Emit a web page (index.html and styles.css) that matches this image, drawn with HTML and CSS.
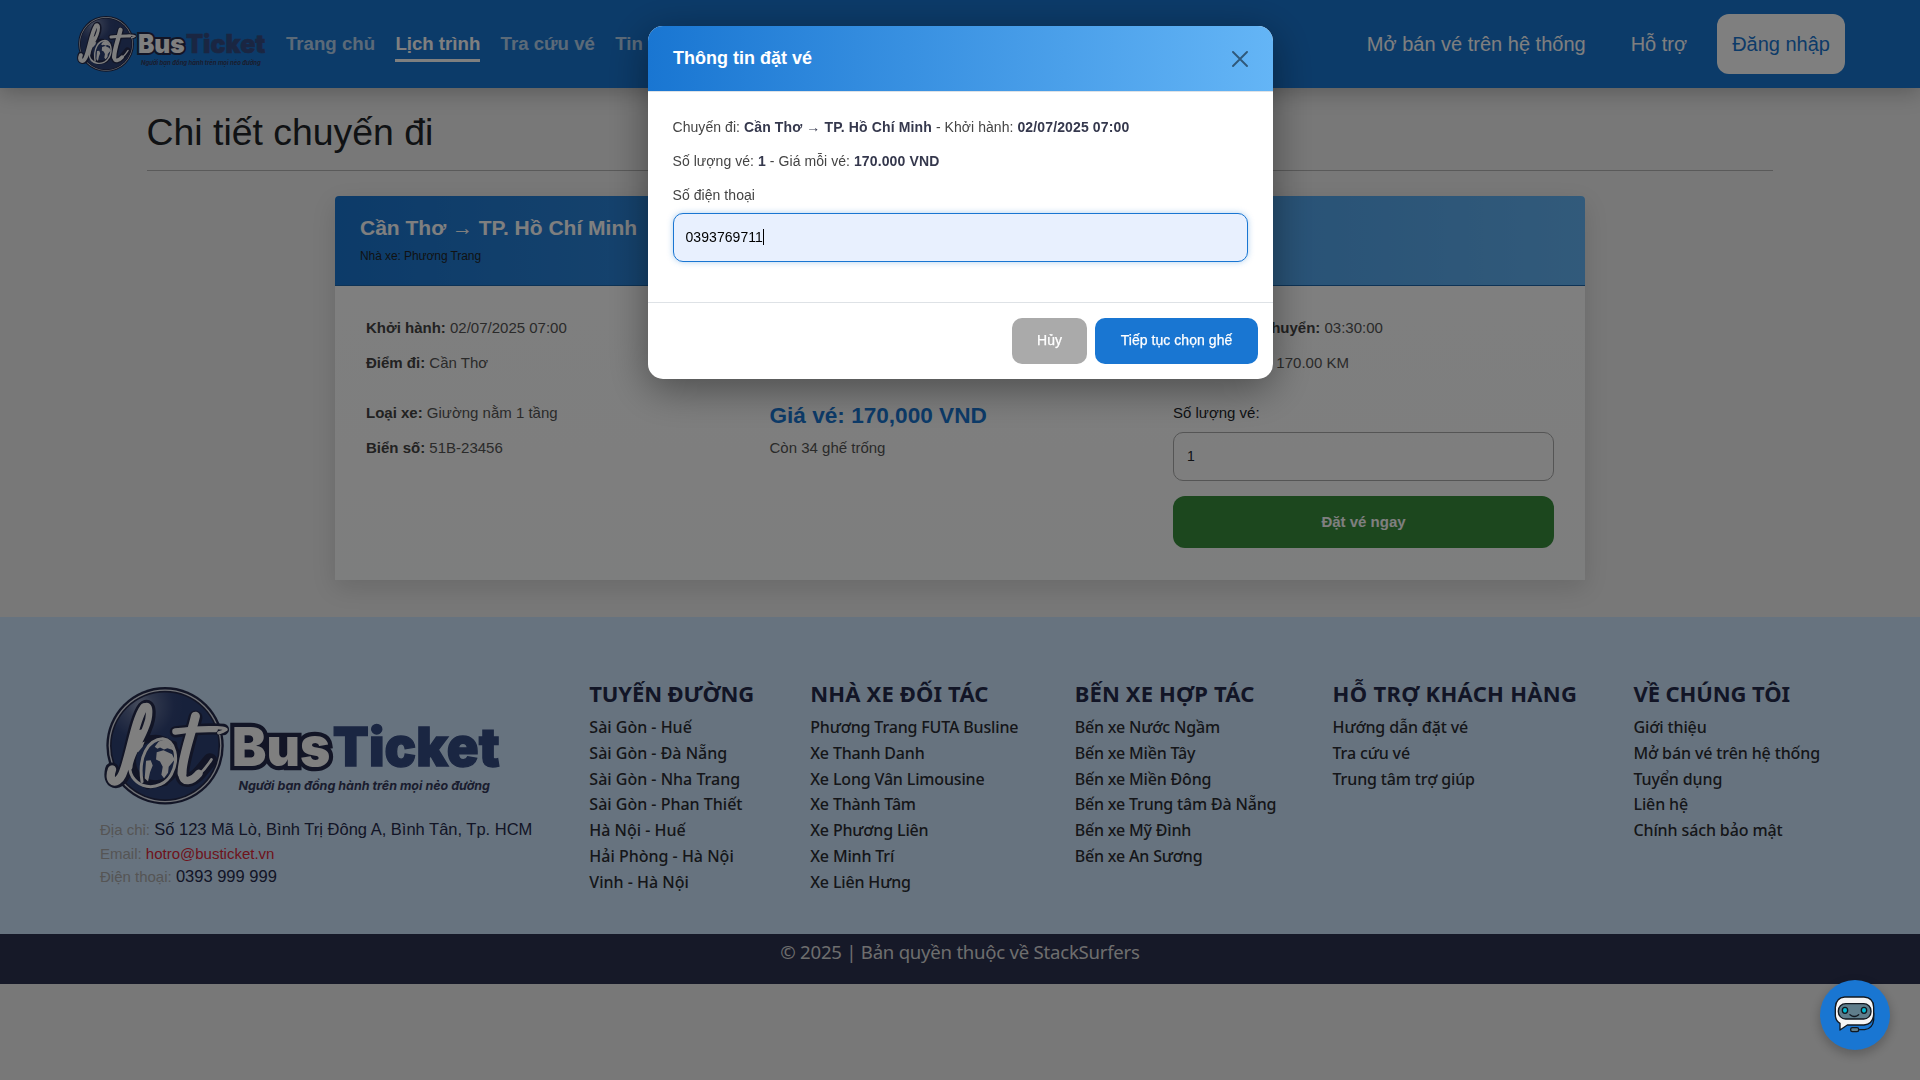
FILE: index.html
```html
<!DOCTYPE html>
<html lang="vi">
<head>
<meta charset="utf-8">
<title>Chi tiết chuyến đi</title>
<link rel="stylesheet" href="styles.css">
</head>
<body>
<svg class="defs" width="0" height="0">
  <defs>
    <radialGradient id="globe" cx=".27" cy=".12" r=".42">
      <stop offset="0" stop-color="#97a3c0"/>
      <stop offset=".3" stop-color="#5d6c96"/>
      <stop offset=".75" stop-color="#33467a"/>
      <stop offset="1" stop-color="#2e4276"/>
    </radialGradient>
    <symbol id="logo" viewBox="20 15 1190 365">
      <circle cx="203" cy="197" r="176" fill="#252b4c"/>
      <circle cx="203" cy="197" r="169" fill="#e0e3ec"/>
      <circle cx="203" cy="197" r="165" fill="#252b4c"/>
      <circle cx="203" cy="197" r="160" fill="url(#globe)"/>
      <g fill="none" stroke-linecap="round" stroke-linejoin="round">
        <g stroke="#252b4c" stroke-width="42">
          <path d="M44 268C34 310 64 312 78 284C98 240 112 120 140 84C158 66 158 110 144 142C128 186 100 226 98 262"/>
          <path d="M294 112C282 160 256 240 254 280C254 312 286 300 308 276C320 262 330 250 338 240"/>
          <path stroke-width="34" d="M234 155C290 148 340 143 378 148"/>
        </g>
        <path fill="#252b4c" stroke="#252b4c" stroke-width="14" d="M146 84L160 110L146 170L232 190L238 250L205 310L150 320L90 270L104 150Z"/>
        <circle cx="174" cy="242" r="68" fill="#2e4276" stroke="#252b4c" stroke-width="20"/>
      </g>
      <g fill="#fff">
        <path d="M110 158Q126 144 144 150L138 170L126 178L132 188L142 184L136 200L122 216L104 206L100 188Z"/>
        <path d="M184 184Q204 172 218 190L232 214L222 208L210 204L200 208L188 202L180 206L172 200Z"/>
        <path d="M178 216L198 210L224 222L232 238L214 260L212 278L200 294L192 284L196 260L188 244L176 238Z"/>
        <path d="M146 242L160 240L166 256L158 276L152 304L142 294Z"/>
      </g>
      <g fill="none" stroke="#fff" stroke-linecap="round" stroke-linejoin="round">
        <path stroke-width="25" d="M44 268C30 306 58 318 74 284C96 238 112 118 140 82"/>
        <path stroke-width="19" d="M138 82C162 62 158 110 146 140C130 186 98 222 96 260"/>
        <path stroke-width="9" d="M96 255C98 330 190 340 222 282C246 238 234 180 196 176C152 178 122 230 134 304"/>
        <path stroke-width="27" d="M294 108C282 160 252 240 254 280"/>
        <path stroke-width="23" d="M254 278C254 314 286 302 304 280"/>
        <path stroke-width="8" d="M300 288Q326 264 342 238"/>
        <path stroke-width="19" d="M234 154C280 148 320 146 352 147"/>
        <path stroke-width="10" d="M340 144Q372 140 386 148Q378 154 364 158"/>
      </g>
      <text class="logo-bus" x="404" y="256" textLength="294" lengthAdjust="spacingAndGlyphs">Bus</text>
      <text class="logo-ticket" x="706" y="256" textLength="500" lengthAdjust="spacingAndGlyphs">Ticket</text>
      <text class="logo-tag" x="423" y="330" textLength="754" lengthAdjust="spacingAndGlyphs">Người bạn đồng hành trên mọi nẻo đường</text>
    </symbol>
  </defs>
</svg>

<header class="navbar">
  <svg class="brand"><use href="#logo"/></svg>
  <nav class="nav-main">
    <a>Trang chủ</a>
    <a class="active">Lịch trình</a>
    <a>Tra cứu vé</a>
    <a>Tin tức</a>
  </nav>
  <nav class="nav-side">
    <a>Mở bán vé trên hệ thống</a>
    <a>Hỗ trợ</a>
    <a class="login">Đăng nhập</a>
  </nav>
</header>

<main class="page">
  <h1>Chi tiết chuyến đi</h1>
  <section class="trip">
    <div class="trip-head">
      <h2>Cần Thơ <span class="arrow">→</span> TP. Hồ Chí Minh</h2>
      <small>Nhà xe: Phương Trang</small>
    </div>
    <div class="trip-body">
      <div class="trip-row">
        <div><p><b>Khởi hành:</b> 02/07/2025 07:00</p><p><b>Điểm đi:</b> Cần Thơ</p></div>
        <div></div>
        <div><p><b>Thời gian di chuyển:</b> 03:30:00</p><p><b>Khoảng cách:</b> 170.00 KM</p></div>
      </div>
      <div class="trip-row">
        <div><p><b>Loại xe:</b> Giường nằm 1 tầng</p><p><b>Biển số:</b> 51B-23456</p></div>
        <div><h3>Giá vé: 170,000 VND</h3><p>Còn 34 ghế trống</p></div>
        <div class="order">
          <label>Số lượng vé:</label>
          <div class="field">1</div>
          <button class="book">Đặt vé ngay</button>
        </div>
      </div>
    </div>
  </section>
</main>

<footer>
  <div class="foot">
    <div class="company">
      <svg class="foot-logo"><use href="#logo"/></svg>
      <p>Địa chỉ: <span>Số 123 Mã Lò, Bình Trị Đông A, Bình Tân, Tp. HCM</span></p>
      <p>Email: <span class="mail">hotro@busticket.vn</span></p>
      <p>Điện thoại: <span>0393 999 999</span></p>
    </div>
    <ul class="c1"><li class="h">TUYẾN ĐƯỜNG</li><li>Sài Gòn - Huế</li><li>Sài Gòn - Đà Nẵng</li><li>Sài Gòn - Nha Trang</li><li>Sài Gòn - Phan Thiết</li><li>Hà Nội - Huế</li><li>Hải Phòng - Hà Nội</li><li>Vinh - Hà Nội</li></ul>
    <ul class="c2"><li class="h">NHÀ XE ĐỐI TÁC</li><li>Phương Trang FUTA Busline</li><li>Xe Thanh Danh</li><li>Xe Long Vân Limousine</li><li>Xe Thành Tâm</li><li>Xe Phương Liên</li><li>Xe Minh Trí</li><li>Xe Liên Hưng</li></ul>
    <ul class="c3"><li class="h">BẾN XE HỢP TÁC</li><li>Bến xe Nước Ngầm</li><li>Bến xe Miền Tây</li><li>Bến xe Miền Đông</li><li>Bến xe Trung tâm Đà Nẵng</li><li>Bến xe Mỹ Đình</li><li>Bến xe An Sương</li></ul>
    <ul class="c4"><li class="h">HỖ TRỢ KHÁCH HÀNG</li><li>Hướng dẫn đặt vé</li><li>Tra cứu vé</li><li>Trung tâm trợ giúp</li></ul>
    <ul class="c5"><li class="h">VỀ CHÚNG TÔI</li><li>Giới thiệu</li><li>Mở bán vé trên hệ thống</li><li>Tuyển dụng</li><li>Liên hệ</li><li>Chính sách bảo mật</li></ul>
  </div>
  <div class="copyright"><span>© 2025 | Bản quyền thuộc về StackSurfers</span></div>
</footer>

<div class="backdrop">
  <div class="modal">
    <div class="modal-head">
      <h4>Thông tin đặt vé</h4>
      <svg width="16" height="16" viewBox="0 0 16 16"><path d="M1 1L15 15M15 1L1 15" stroke="#000" stroke-opacity=".5" stroke-width="1.9" stroke-linecap="round"/></svg>
    </div>
    <div class="modal-body">
      <p>Chuyến đi: <b>Cần Thơ <span class="arrow">→</span> TP. Hồ Chí Minh</b> - Khởi hành: <b>02/07/2025 07:00</b></p>
      <p>Số lượng vé: <b>1</b> - Giá mỗi vé: <b>170.000 VND</b></p>
      <label>Số điện thoại</label>
      <div class="phone">0393769711<i></i></div>
    </div>
    <div class="modal-foot">
      <button class="cancel">Hủy</button>
      <button class="next">Tiếp tục chọn ghế</button>
    </div>
  </div>
</div>

<div class="chat">
  <svg width="42" height="38" viewBox="0 0 126 114">
    <path d="M32 3H90Q119 5 119 34V56Q117 84 90 87H40L18 102V82Q4 74 4 56V34Q6 5 32 3Z" fill="#f5f5f5" stroke="#111820" stroke-width="4" stroke-linejoin="round"/>
    <rect x="13" y="23" width="98" height="46" rx="22" fill="#5f7d8b" stroke="#111820" stroke-width="4"/>
    <ellipse cx="33" cy="43" rx="8" ry="9" fill="#00bcd4" stroke="#111820" stroke-width="4"/>
    <ellipse cx="90" cy="43" rx="8" ry="9" fill="#00bcd4" stroke="#111820" stroke-width="4"/>
    <path d="M48 56Q61 67 74 56" fill="none" stroke="#111820" stroke-width="4" stroke-linecap="round"/>
    <path d="M119 50V72Q116 98 92 101H74" fill="none" stroke="#111820" stroke-width="4"/>
    <rect x="50" y="95" width="24" height="12" rx="5" fill="#5f7d8b" stroke="#111820" stroke-width="4"/>
  </svg>
</div>
</body>
</html>
```
FILE: styles.css
```css
* { box-sizing: border-box; margin: 0; padding: 0; }
body {
  background: #f0f0f0;
  font-family: "Liberation Sans", Arial, sans-serif;
  color: #212529;
  min-height: 1080px;
  overflow: hidden;
}
.defs { display: block; }
button { font-family: inherit; border: 0; }
.arrow { font-weight: 400; }

.logo-bus, .logo-ticket { font-family: Inter, sans-serif; font-weight: 900; font-size: 160px; }
.logo-bus { fill: #fff; stroke: #252b4c; stroke-width: 26px; paint-order: stroke; }
.logo-ticket { fill: #354d85; stroke: #354d85; stroke-width: 4px; }
.logo-tag { font-family: Inter, sans-serif; font-weight: 700; font-style: italic; font-size: 37px; fill: #343a5c; }

.navbar {
  height: 88px;
  background: #1976d2;
  box-shadow: 0 4px 20px rgba(0, 0, 0, .25);
  display: flex;
  align-items: center;
  padding: 0 75px 0 77px;
}
.brand { width: 189px; height: 58px; }
.nav-main { display: flex; gap: 20.3px; margin-left: 20px; font-size: 18.65px; font-weight: 700; white-space: nowrap; }
.nav-main a { color: rgba(255, 255, 255, .7); height: 36px; line-height: 35px; border-bottom: 3px solid transparent; }
.nav-main a.active { color: #fff; border-color: #fff; }
.nav-side { margin-left: auto; display: flex; align-items: center; font-size: 20px; color: #fff; gap: 45px; white-space: nowrap; }
.login { background: #fff; color: #1976d2; height: 60px; line-height: 60px; padding: 0 15px; border-radius: 12px; margin-left: -15px; }

.page { padding: 20px 147px 0; height: 529px; }
h1 { font-size: 37.4px; font-weight: 400; line-height: 49px; height: 63px; border-bottom: 1px solid #b4b4b4; text-indent: -.5px; }
.trip { width: 1250px; margin: 25px auto 0; height: 384px; background: linear-gradient(#fff, #fbfcfc); border-radius: 4px 4px 0 0; box-shadow: 0 8px 24px rgba(0, 0, 0, .12); }
.trip-head { height: 90px; padding: 19px 25px; background: linear-gradient(90deg, #1976d2, #64b5f6); border-bottom: 1px solid #1c67ac; border-radius: 4px 4px 0 0; }
.trip-head h2 { font-size: 21px; line-height: 26px; color: #fff; white-space: nowrap; }
.trip-head small { display: block; font-size: 12px; line-height: 16px; margin-top: 7px; letter-spacing: -.08px; }
.trip-body { padding: 32px 31px; font-size: 15px; color: #555; display: grid; gap: 31px; }
.trip-row { display: grid; grid-template-columns: repeat(3, 381px); column-gap: 22.5px; }
.trip-body p { line-height: 19px; margin-bottom: 16px; }
.trip-row:first-child p:last-child { margin: 0; }
.trip-body b { color: #444; }
.trip-body h3 { font-size: 22.6px; line-height: 26px; color: #1976d2; margin-bottom: 9px; }
.order { color: #212529; display: flex; flex-direction: column; }
.order label { line-height: 19px; margin-bottom: 10px; }
.field { height: 49px; line-height: 47px; border: 1px solid #aaa; border-radius: 10px; padding: 0 13px; font-size: 14px; }
.book { height: 52px; margin-top: 15px; padding-bottom: 2px; border-radius: 12px; background: #388e3c; color: #fff; font-size: 15px; font-weight: 700; }

footer { font-family: "Noto Sans", sans-serif; }
.foot { height: 317px; background: #cfe6fe; padding: 61px 100px 0 100px; display: flex; }
.company { width: 489.5px; font-family: "Liberation Sans", sans-serif; padding-top: 7px; }
.foot-logo { display: block; width: 397px; height: 122px; margin: 0 0 11px 4px; }
.company p { font-size: 15px; line-height: 23.7px; color: #aaa; white-space: nowrap; }
.company span { font-size: 16.5px; color: #252b4c; }
.company .mail { font-size: 15px; color: #dc2638; }
.foot ul { list-style: none; font-size: 16px; line-height: 25.8px; font-weight: 500; color: #2a2d33; white-space: nowrap; }
.foot .h { font-size: 22px; line-height: 30px; font-weight: 700; color: #252b4c; margin-bottom: 7px; letter-spacing: .15px; }
.c1 { width: 221px; }
.c2 { width: 264.5px; letter-spacing: -.16px; }
.c3 { width: 258px; letter-spacing: -.17px; }
.c4 { width: 301px; letter-spacing: -.14px; }
.c5 { letter-spacing: -.12px; }
.foot .c1 .h { letter-spacing: -.15px; }
.foot .c4 .h { letter-spacing: .3px; }
.foot .c5 .h { letter-spacing: -.1px; }
.copyright { height: 50px; background: #2c3250; color: #ddd; text-align: center; font-size: 18.6px; letter-spacing: -.25px; line-height: 36px; }

.backdrop { position: fixed; inset: 0; background: rgba(0, 0, 0, .5); }
.modal { width: 625px; height: 353px; margin: 26px 0 0 648px; background: #fff; border-radius: 15px; overflow: hidden; box-shadow: 0 10px 40px rgba(0, 0, 0, .4); }
.modal-head { height: 66px; background: linear-gradient(90deg, #1976d2, #64b5f6); border-bottom: 1px solid #dee2e6; display: flex; align-items: center; justify-content: space-between; padding: 0 25px; }
.modal-head h4 { font-size: 18px; color: #fff; }
.modal-body { height: 210px; padding: 25px 25px 0 24.5px; font-size: 14px; letter-spacing: .06px; color: #444; white-space: nowrap; }
.modal-body p { line-height: 20px; height: 20px; margin-bottom: 14px; }
.modal-body b { color: #35384d; letter-spacing: .13px; }
.modal-body label { display: block; line-height: 20px; margin-bottom: 8px; }
.phone { height: 49px; border: 1px solid #1976d2; border-radius: 10px; background: #e8f0fe; color: #000; padding: 0 12px 2px; display: flex; align-items: center; box-shadow: 0 0 6px rgba(25, 118, 210, .35); }
.phone i { width: 1px; height: 16px; background: #000; }
.modal-foot { height: 77px; border-top: 1px solid #dee2e6; display: flex; gap: 8px; justify-content: flex-end; padding: 15px; }
.modal-foot button { height: 46px; border-radius: 10px; color: #fff; font-size: 14px; padding-bottom: 2px; -webkit-text-stroke: .25px #fff; }
.cancel { width: 75px; background: #aaa; }
.next { width: 163px; background: #1976d2; letter-spacing: .05px; }

.chat { position: fixed; left: 1820px; top: 980px; width: 70px; height: 70px; border-radius: 50%; background: #1976d2; box-shadow: 0 4px 12px rgba(0, 0, 0, .25); display: flex; align-items: center; justify-content: center; }
```
